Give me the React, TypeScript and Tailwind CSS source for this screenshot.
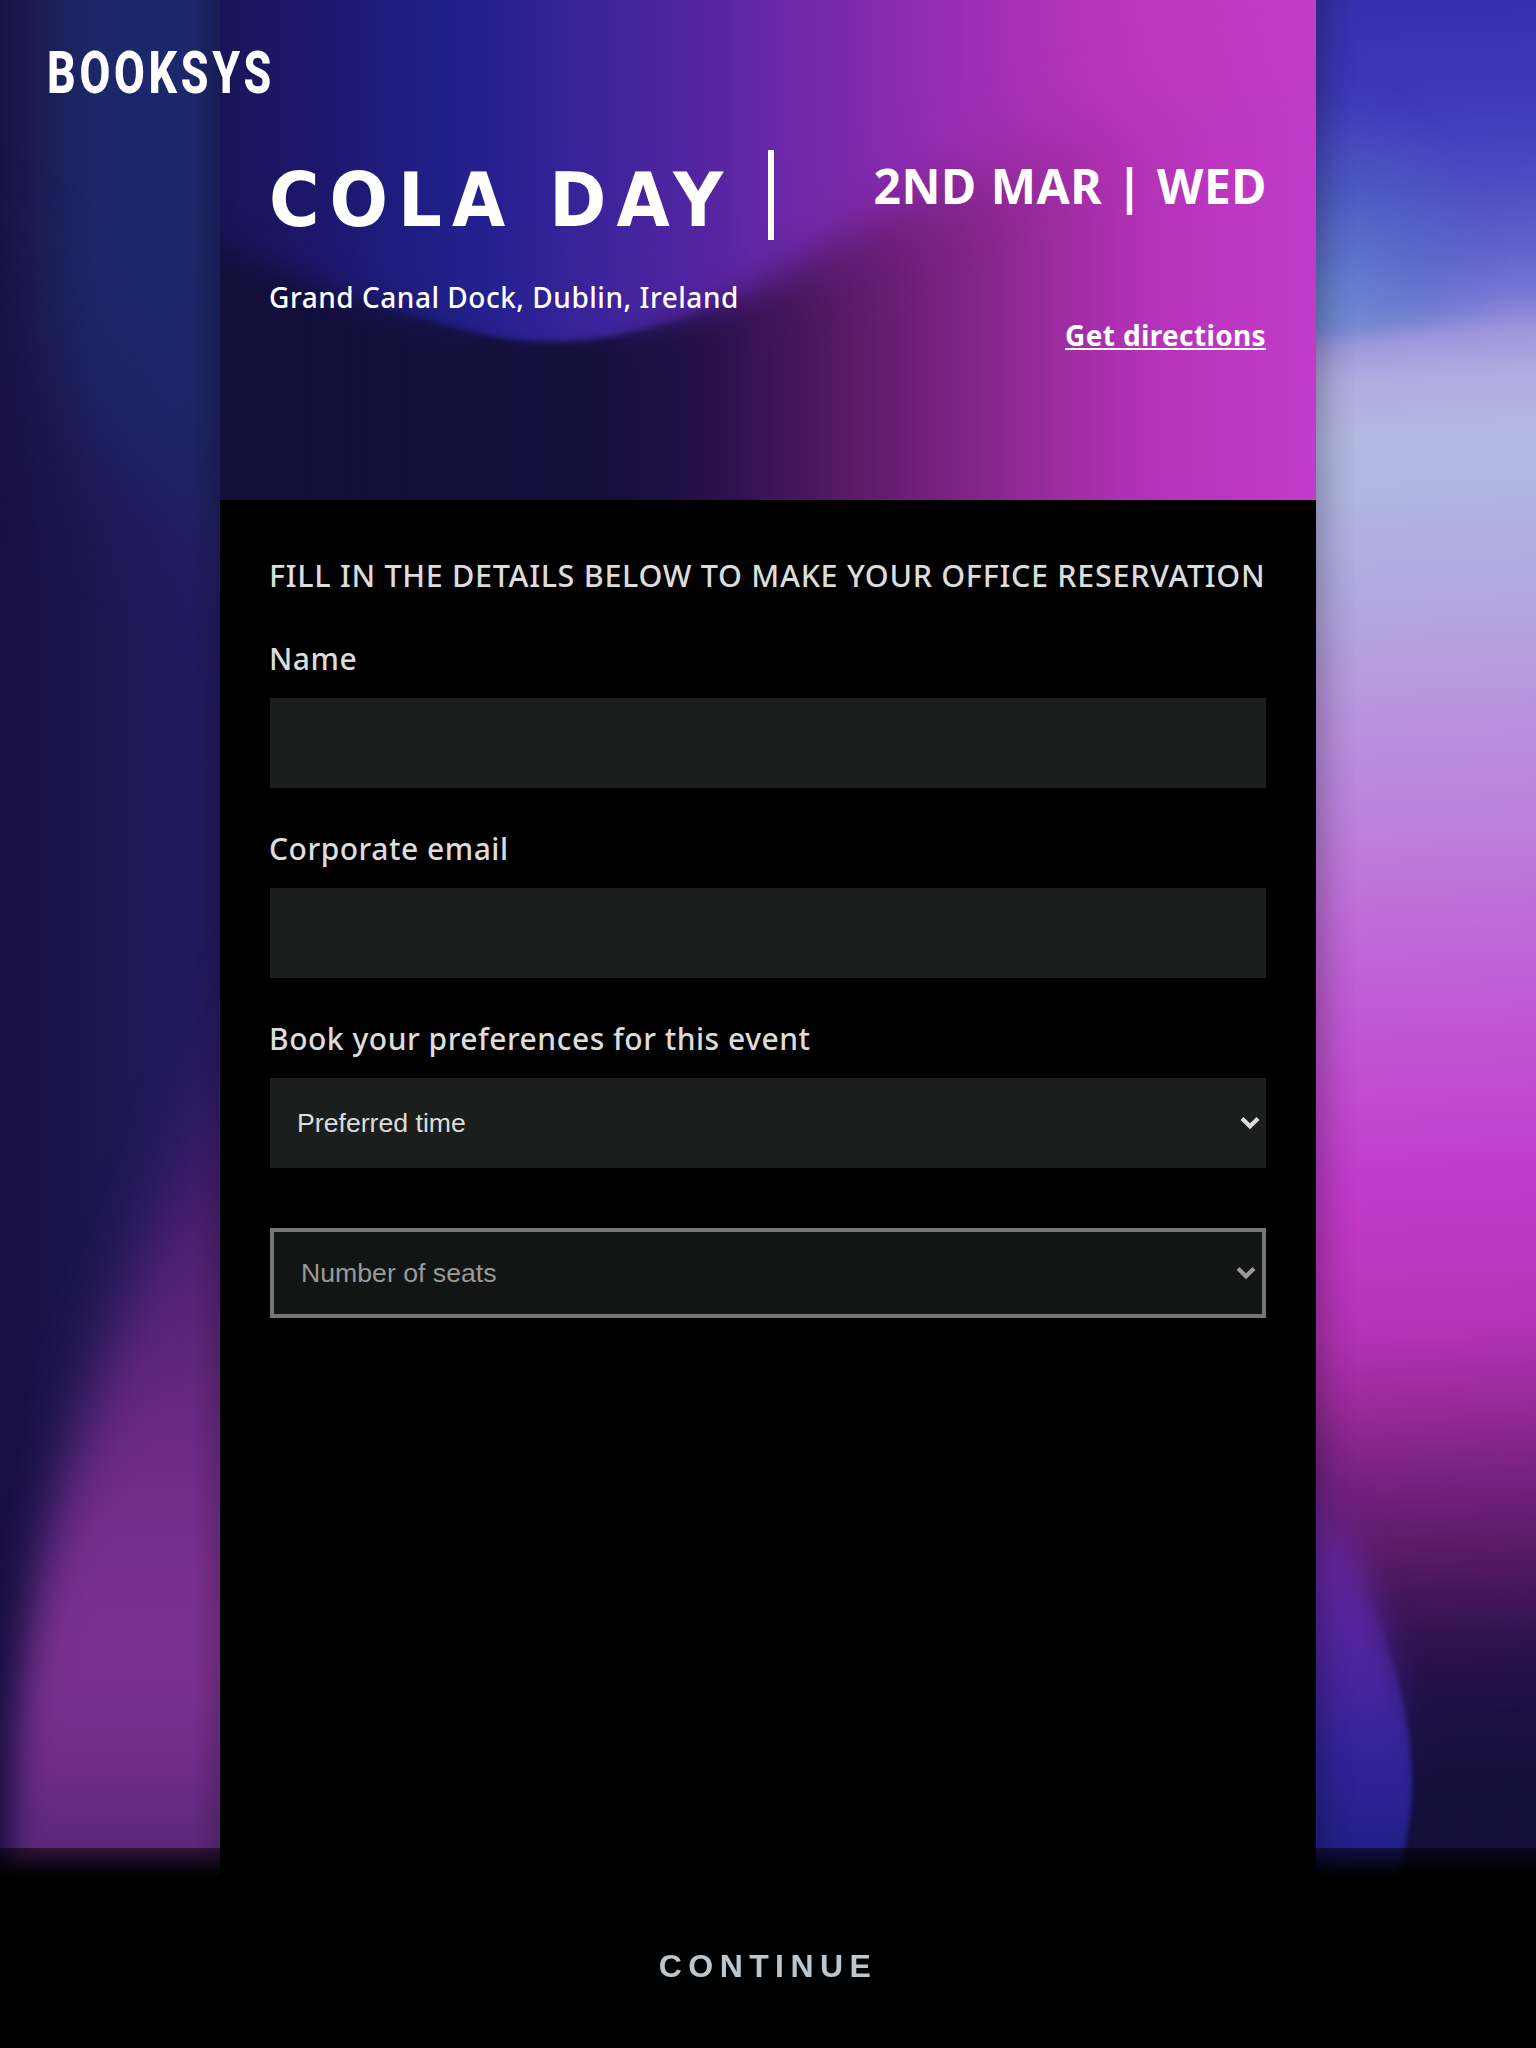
import type { ReactNode } from "react";

type Stop = [number, string];

function Gradient({ id, stops, vertical }: { id: string; stops: Stop[]; vertical?: boolean }) {
  return (
    <linearGradient id={id} x1="0" y1="0" x2={vertical ? "0" : "1"} y2={vertical ? "1" : "0"}>
      {stops.map(([offset, color]) => (
        <stop key={offset} offset={offset} stopColor={color} />
      ))}
    </linearGradient>
  );
}

function Blur({ id, deviation }: { id: string; deviation: string }) {
  return (
    <filter
      id={id}
      filterUnits="userSpaceOnUse"
      x="-400"
      y="-400"
      width="2000"
      height="3000"
      colorInterpolationFilters="sRGB"
    >
      <feGaussianBlur stdDeviation={deviation} />
    </filter>
  );
}

/* Deep blue backdrop with a magenta glow rising from the bottom. */
function LeftArtwork() {
  return (
    <svg className="h-full w-[220px]" viewBox="0 0 220 2048" preserveAspectRatio="none" aria-hidden="true">
      <defs>
        <Gradient
          id="left-base"
          stops={[
            [0, "#191344"],
            [0.2, "#1b1e56"],
            [0.45, "#1d276a"],
            [0.8, "#1c286c"],
            [1, "#1d2464"],
          ]}
        />
        <Gradient
          id="left-low"
          stops={[
            [0, "#180f42"],
            [0.25, "#1b144a"],
            [0.6, "#1f1856"],
            [1, "#231a5e"],
          ]}
        />
        <Blur id="left-soft" deviation="35 90" />
        <Blur id="left-blob" deviation="15 75" />
        <mask id="left-mask" maskUnits="userSpaceOnUse" x="0" y="0" width="220" height="2048">
          <path d="M-160 260L380 620L380 2300L-160 2300Z" fill="#fff" filter="url(#left-soft)" />
        </mask>
        <linearGradient id="left-pink" gradientUnits="userSpaceOnUse" x1="0" x2="0" y1="960" y2="2150">
          <stop offset="0" stopColor="#3a1a64" />
          <stop offset="0.2" stopColor="#4b1e6e" />
          <stop offset="0.38" stopColor="#68297f" />
          <stop offset="0.5" stopColor="#782f90" />
          <stop offset="0.6" stopColor="#803293" />
          <stop offset="0.66" stopColor="#782f8f" />
          <stop offset="0.73" stopColor="#5c2778" />
          <stop offset="1" stopColor="#3c1a5a" />
        </linearGradient>
        <linearGradient id="edge-left" x1="0" x2="1" y1="0" y2="0">
          <stop offset="0" stopColor="#000" stopOpacity="0" />
          <stop offset="1" stopColor="#000" stopOpacity="0.16" />
        </linearGradient>
      </defs>
      <rect width="220" height="2048" fill="url(#left-base)" />
      <rect width="220" height="2048" fill="url(#left-low)" mask="url(#left-mask)" />
      <path
        d="M340 940C220 1090 156 1220 114 1350C60 1480 28 1600 14 1750L4 2150L340 2150Z"
        fill="url(#left-pink)"
        filter="url(#left-blob)"
      />
      <rect x="192" width="28" height="2048" fill="url(#edge-left)" />
    </svg>
  );
}

const bubble = "M-60 1400C0 1470 46 1560 70 1640C87 1690 96 1740 96 1780C96 1830 84 1870 70 1920L-60 2048Z";

/* Sky-to-magenta sweep with an indigo bubble at the bottom. */
function RightArtwork() {
  return (
    <svg className="h-full w-[220px]" viewBox="0 0 220 2048" preserveAspectRatio="none" aria-hidden="true">
      <defs>
        <Gradient
          id="right-base"
          vertical
          stops={[
            [0, "#372fad"],
            [0.05, "#3f38b8"],
            [0.09, "#4c4cc2"],
            [0.125, "#6164cc"],
            [0.146, "#7b7ad6"],
            [0.162, "#9d96dc"],
            [0.183, "#b0ade1"],
            [0.21, "#b3b8e2"],
            [0.24, "#b0b5e2"],
            [0.28, "#b1aae0"],
            [0.33, "#b898de"],
            [0.4, "#bd7edc"],
            [0.46, "#c063d7"],
            [0.52, "#c14cd1"],
            [0.565, "#c03bca"],
            [0.605, "#bd36c0"],
            [0.64, "#b132b3"],
            [0.672, "#982a9a"],
            [0.71, "#74217d"],
            [0.75, "#511961"],
            [0.785, "#2f134e"],
            [0.82, "#1b1043"],
            [0.855, "#150f3b"],
            [1, "#150f3a"],
          ]}
        />
        <linearGradient id="bubble-fill" gradientUnits="userSpaceOnUse" x1="0" x2="0" y1="1430" y2="2048">
          <stop offset="0" stopColor="#73218a" />
          <stop offset="0.2" stopColor="#6b27a0" />
          <stop offset="0.36" stopColor="#5026a2" />
          <stop offset="0.54" stopColor="#30239a" />
          <stop offset="0.68" stopColor="#232089" />
          <stop offset="1" stopColor="#1f1c80" />
        </linearGradient>
        <Blur id="bubble-soft" deviation="15 26" />
        <Blur id="bubble-crisp" deviation="2.5" />
        <Blur id="sky-soft" deviation="6 9" />
        <linearGradient id="sharp-fade" gradientUnits="userSpaceOnUse" x1="0" x2="0" y1="1590" y2="1780">
          <stop offset="0" stopColor="#000" />
          <stop offset="1" stopColor="#fff" />
        </linearGradient>
        <mask id="sharp-mask" maskUnits="userSpaceOnUse" x="0" y="1400" width="220" height="648">
          <rect y="1400" width="220" height="648" fill="url(#sharp-fade)" />
        </mask>
        <radialGradient id="sky" cx="0" cy="0" r="1" gradientUnits="userSpaceOnUse" gradientTransform="translate(20 310) scale(170 230)">
          <stop offset="0" stopColor="#668fd0" stopOpacity="0.7" />
          <stop offset="0.5" stopColor="#4f74c6" stopOpacity="0.35" />
          <stop offset="1" stopColor="#4a62c4" stopOpacity="0" />
        </radialGradient>
        <linearGradient id="edge-right" x1="0" x2="1" y1="0" y2="0">
          <stop offset="0" stopColor="#000" stopOpacity="0.2" />
          <stop offset="0.5" stopColor="#000" stopOpacity="0.06" />
          <stop offset="1" stopColor="#000" stopOpacity="0" />
        </linearGradient>
        <g id="right-sweep" transform="skewY(-3)">
          <rect y="-20" width="220" height="24" fill="#372fad" />
          <rect y="0" width="220" height="2100" fill="url(#right-base)" />
        </g>
      </defs>
      <use href="#right-sweep" />
      <path d="M-40 60H240V312L-40 346Z" fill="url(#sky)" filter="url(#sky-soft)" />
      <path d={bubble} fill="url(#bubble-fill)" filter="url(#bubble-soft)" />
      <g mask="url(#sharp-mask)">
        <use href="#right-sweep" />
        <path d={bubble} fill="url(#bubble-fill)" filter="url(#bubble-crisp)" />
      </g>
      <rect width="40" height="2048" fill="url(#edge-right)" />
    </svg>
  );
}

const valley =
  "M-100 205C-40 222 0 245 60 270C140 302 210 322 265 335C300 343 350 345 400 335C470 322 540 290 600 252C690 200 760 165 860 130L1000 90L1400 40L1400 800L-100 800Z";

/* Indigo-to-magenta cover behind the event summary. */
function CoverArtwork() {
  return (
    <svg className="absolute inset-0 h-full w-full" viewBox="0 0 1096 500" preserveAspectRatio="none" aria-hidden="true">
      <defs>
        <Gradient
          id="cover-top"
          stops={[
            [0, "#1a1559"],
            [0.08, "#1c176a"],
            [0.2, "#211f88"],
            [0.27, "#292193"],
            [0.36, "#40249c"],
            [0.45, "#5726a2"],
            [0.55, "#7629ab"],
            [0.65, "#932db3"],
            [0.75, "#ad32b8"],
            [0.85, "#be36be"],
            [1, "#c33cc8"],
          ]}
        />
        <linearGradient id="cover-bottom" gradientUnits="userSpaceOnUse" x1="0" y1="0" x2="1096" y2="0">
          <stop offset="0" stopColor="#120f3b" />
          <stop offset="0.34" stopColor="#150f3c" />
          <stop offset="0.41" stopColor="#1d1043" />
          <stop offset="0.47" stopColor="#31124e" />
          <stop offset="0.55" stopColor="#4f1861" />
          <stop offset="0.64" stopColor="#722079" />
          <stop offset="0.72" stopColor="#8d2891" />
          <stop offset="0.8" stopColor="#a92fac" />
          <stop offset="0.88" stopColor="#b935bd" stopOpacity="0.9" />
          <stop offset="1" stopColor="#bf3bca" stopOpacity="0.4" />
        </linearGradient>
        <Blur id="valley-soft" deviation="40 34" />
        <Blur id="valley-mid" deviation="16" />
        <Blur id="valley-crisp" deviation="3" />
        <linearGradient id="crisp-fade" gradientUnits="userSpaceOnUse" x1="0" y1="0" x2="1096" y2="0">
          <stop offset="0.08" stopColor="#000" />
          <stop offset="0.26" stopColor="#fff" />
          <stop offset="0.34" stopColor="#fff" />
          <stop offset="0.48" stopColor="#000" />
        </linearGradient>
        <linearGradient id="mid-fade" gradientUnits="userSpaceOnUse" x1="0" y1="0" x2="1096" y2="0">
          <stop offset="0.45" stopColor="#fff" />
          <stop offset="0.68" stopColor="#000" />
        </linearGradient>
        <mask id="crisp-mask" maskUnits="userSpaceOnUse" x="0" y="0" width="1096" height="500">
          <rect width="1096" height="500" fill="url(#crisp-fade)" />
        </mask>
        <mask id="mid-mask" maskUnits="userSpaceOnUse" x="0" y="0" width="1096" height="500">
          <rect width="1096" height="500" fill="url(#mid-fade)" />
        </mask>
      </defs>
      <rect width="1096" height="500" fill="url(#cover-top)" />
      <path d={valley} fill="url(#cover-bottom)" filter="url(#valley-soft)" />
      <g mask="url(#mid-mask)">
        <rect width="1096" height="500" fill="url(#cover-top)" />
        <path d={valley} fill="url(#cover-bottom)" filter="url(#valley-mid)" />
      </g>
      <g mask="url(#crisp-mask)">
        <rect width="1096" height="500" fill="url(#cover-top)" />
        <path d={valley} fill="url(#cover-bottom)" filter="url(#valley-crisp)" />
      </g>
    </svg>
  );
}

function Field({ label, children }: { label: string; children: ReactNode }) {
  return (
    <div className="flex h-[190px] flex-col">
      <label className="-ml-px flex h-[60px] items-center pb-[19px] text-[30px] font-medium leading-none tracking-[0.52px]">
        {label}
      </label>
      {children}
    </div>
  );
}

function Chevron() {
  return (
    <svg className="h-[14px] w-[20px]" viewBox="0 0 20 14" fill="none" stroke="currentColor" strokeWidth="4.2" aria-hidden="true">
      <path d="M2 2.4L10 10.2L18 2.4" />
    </svg>
  );
}

export default function App() {
  return (
    <div className="relative flex h-[2048px] w-[1536px] flex-col overflow-hidden bg-black font-['Noto_Sans',sans-serif] text-[#dcdcdc]">
      <div className="flex h-full">
        <LeftArtwork />
        <main className="h-full w-[1096px] bg-black">
          <header className="relative flex h-[500px] justify-between px-[50px] text-white">
            <CoverArtwork />
            <div className="relative pt-[150px]">
              <div className="flex h-[90px] items-center">
                <h1 className="-ml-px w-[499px] origin-left scale-x-[0.93] whitespace-nowrap pt-[10px] font-['DejaVu_Sans',sans-serif] text-[74px] font-bold leading-[90px] tracking-[10.8px]">
                  COLA DAY
                </h1>
                <div className="h-[90px] w-[6px] bg-white" />
              </div>
              <p className="-ml-px mt-[35px] text-[28px] font-medium leading-[44px] tracking-[0.52px]">
                Grand Canal Dock, Dublin, Ireland
              </p>
            </div>
            <div className="relative flex flex-col items-end pt-[154px]">
              <p className="mr-[-1px] whitespace-nowrap text-[48px] font-bold leading-[64px] tracking-[0.5px] [word-spacing:1px]">
                2ND MAR | WED
              </p>
              <a className="mt-[104px] border-b-[2px] border-white text-[28px] font-bold leading-[26px] tracking-[0.36px]">
                Get directions
              </a>
            </div>
          </header>
          <form className="px-[50px] pt-[53px]">
            <h2 className="-ml-px whitespace-nowrap text-[30.5px] font-medium leading-[44px] tracking-[0.7px]">
              FILL IN THE DETAILS BELOW TO MAKE YOUR OFFICE RESERVATION
            </h2>
            <div className="mt-[41px]">
              <Field label="Name">
                <input className="h-[90px] w-full bg-[#1c1e1d]" />
              </Field>
              <Field label="Corporate email">
                <input className="h-[90px] w-full bg-[#1c1e1d]" />
              </Field>
              <Field label="Book your preferences for this event">
                <div className="flex h-[90px] items-center justify-between bg-[#1c1e1d] pl-[27px] pr-[6px] font-['Liberation_Sans',sans-serif] text-[26.67px] leading-none">
                  Preferred time
                  <Chevron />
                </div>
              </Field>
              <div className="mt-[20px] flex h-[90px] items-center justify-between border-4 border-[#767676] bg-[#131514] pl-[27px] pr-[6px] font-['Liberation_Sans',sans-serif] text-[26.67px] leading-none text-[#9a9a9a]">
                Number of seats
                <Chevron />
              </div>
            </div>
          </form>
        </main>
        <RightArtwork />
      </div>
      <div className="absolute left-[47px] top-[35px] origin-left scale-x-[0.745] font-['Roboto',sans-serif] text-[60px] font-extrabold leading-[76px] tracking-[5px] text-white">
        BOOKSYS
      </div>
      <footer className="absolute inset-x-0 bottom-0 flex h-[200px] items-center justify-center bg-linear-to-b from-black/50 to-black to-[29px] pt-[36px]">
        <button className="font-['Liberation_Sans',sans-serif] text-[32px] font-bold leading-none tracking-[6.4px] text-[#bdc6cc]">CONTINUE</button>
      </footer>
    </div>
  );
}
